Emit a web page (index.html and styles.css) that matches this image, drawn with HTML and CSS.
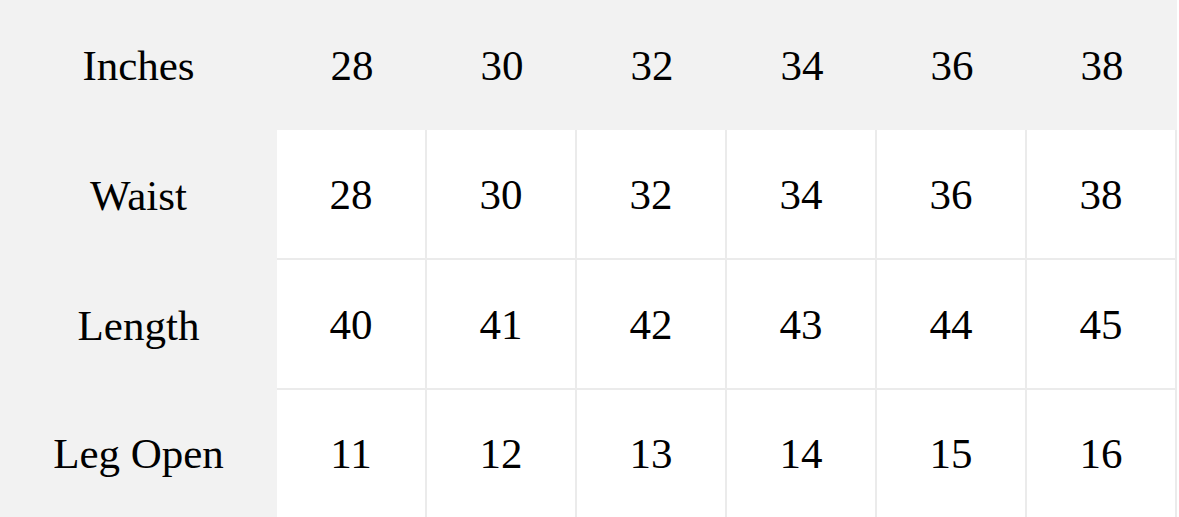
FILE: index.html
```html
<!DOCTYPE html>
<html lang="en">
<head>
<meta charset="utf-8">
<title>Size Chart</title>
<link rel="stylesheet" href="styles.css">
</head>
<body>
<div class="chart">
  <div class="cell head label">Inches</div>
  <div class="cell head">28</div>
  <div class="cell head">30</div>
  <div class="cell head">32</div>
  <div class="cell head">34</div>
  <div class="cell head">36</div>
  <div class="cell head">38</div>

  <div class="cell label">Waist</div>
  <div class="cell val">28</div>
  <div class="cell val">30</div>
  <div class="cell val">32</div>
  <div class="cell val">34</div>
  <div class="cell val">36</div>
  <div class="cell val">38</div>

  <div class="cell label">Length</div>
  <div class="cell val">40</div>
  <div class="cell val">41</div>
  <div class="cell val">42</div>
  <div class="cell val">43</div>
  <div class="cell val">44</div>
  <div class="cell val">45</div>

  <div class="cell label">Leg Open</div>
  <div class="cell val last">11</div>
  <div class="cell val last">12</div>
  <div class="cell val last">13</div>
  <div class="cell val last">14</div>
  <div class="cell val last">15</div>
  <div class="cell val last">16</div>
</div>
</body>
</html>
```

FILE: styles.css
```css
html, body {
  margin: 0;
  padding: 0;
  background: #ffffff;
}

.chart {
  display: grid;
  grid-template-columns: 277px repeat(6, 150px);
  grid-template-rows: 130px 130px 130px 127px;
  width: 1177px;
  background: #f2f2f2;
  font-family: "Liberation Serif", "Times New Roman", serif;
  font-size: 43px;
  color: #000000;
}

.cell {
  display: flex;
  align-items: center;
  justify-content: center;
  box-sizing: border-box;
}

.head {
  background: #f2f2f2;
}

.label {
  background: #f2f2f2;
}

.val {
  background: #ffffff;
  border-right: 2px solid #ebebeb;
  border-bottom: 2px solid #ebebeb;
}

.val.last {
  border-bottom: none;
}
```
